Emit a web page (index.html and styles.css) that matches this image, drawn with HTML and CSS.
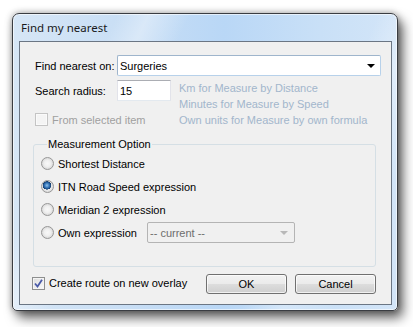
FILE: index.html
```html
<!DOCTYPE html>
<html>
<head>
<meta charset="utf-8">
<link rel="stylesheet" href="styles.css">
</head>
<body>
<div class="window">
  <div class="titlebar">Find my nearest</div>
  <div class="client">
    <div class="row-find">
      <span class="label">Find nearest on:</span>
      <div class="combo combo-main"><span class="combo-text">Surgeries</span><span class="arrow"></span></div>
    </div>
    <div class="row-radius">
      <div class="left">
        <div class="line"><span class="label">Search radius:</span><div class="textbox">15</div></div>
        <div class="check disabled"><span class="box"></span><span class="check-text">From selected item</span></div>
      </div>
      <div class="hints">
        <div>Km for Measure by Distance</div>
        <div>Minutes for Measure by Speed</div>
        <div>Own units for Measure by own formula</div>
      </div>
    </div>
    <fieldset class="group">
      <legend>Measurement Option</legend>
      <div class="radio"><span class="dot"></span><span class="radio-text">Shortest Distance</span></div>
      <div class="radio"><span class="dot on"></span><span class="radio-text">ITN Road Speed expression</span></div>
      <div class="radio"><span class="dot"></span><span class="radio-text">Meridian 2 expression</span></div>
      <div class="radio"><span class="dot"></span><span class="radio-text own">Own expression</span>
        <div class="combo combo-off"><span class="combo-text">-- current --</span><span class="arrow"></span></div>
      </div>
    </fieldset>
    <div class="footer">
      <div class="check"><span class="box checked"><svg width="9" height="9" viewBox="0 0 9 9"><path d="M1 4.5 L3.5 7.5 L8 0.8" fill="none" stroke="#4a5aa8" stroke-width="1.8"/></svg></span><span class="check-text">Create route on new overlay</span></div>
      <div class="buttons">
        <div class="btn">OK</div>
        <div class="btn">Cancel</div>
      </div>
    </div>
  </div>
</div>
</body>
</html>
```

FILE: styles.css
```css
html, body {
  margin: 0;
  padding: 0;
  background: #ffffff;
}
body {
  width: 413px;
  height: 327px;
  overflow: hidden;
  font-family: "Liberation Sans", Arial, sans-serif;
  font-size: 11px;
  color: #000;
}
.window {
  margin: 13px 0 0 12px;
  width: 386px;
  height: 298px;
  box-sizing: border-box;
  border: 1px solid #3a3d42;
  border-radius: 7px 7px 5px 5px;
  padding: 0 5px 5px 6px;
  display: flex;
  flex-direction: column;
  background:
    linear-gradient(115deg, rgba(255,255,255,0) 20%, rgba(255,255,255,0.35) 26%, rgba(255,255,255,0) 34%, rgba(255,255,255,0) 70%, rgba(255,255,255,0.3) 78%, rgba(255,255,255,0) 88%),
    linear-gradient(to right, #d6e6f6 0%, #c8def5 30%, #b9d7f6 55%, #c9e0f7 80%, #d3e5f8 100%);
  box-shadow: 5px 7px 12px rgba(0,0,0,0.6), 0 0 7px rgba(0,0,0,0.35), inset 0 0 0 1px rgba(255,255,255,0.6);
}
.titlebar {
  height: 27px;
  display: flex;
  align-items: center;
  padding-left: 2px;
  font-family: "Noto Sans", "Open Sans", sans-serif;
  font-size: 11.5px;
  color: #1a1a1a;
  flex: none;
}
.client {
  flex: 1;
  background: #f0f0f0;
  border: 1px solid #6b7684;
  display: flex;
  flex-direction: column;
}
.label {
  display: inline-block;
  width: 82px;
  flex: none;
}
.row-find {
  margin-top: 13px;
  padding-left: 15px;
  display: flex;
  align-items: center;
  height: 21px;
}
.combo {
  box-sizing: border-box;
  height: 21px;
  display: flex;
  align-items: center;
  position: relative;
}
.combo-main {
  width: 264px;
  background: #fff;
  border: 1px solid #9fb5cc;
  border-right-color: #b7d1ea;
  border-bottom-color: #b7d1ea;
  border-radius: 2px;
  padding-left: 2px;
}
.combo-text {
  flex: 1;
}
.arrow {
  width: 0;
  height: 0;
  border-left: 4px solid transparent;
  border-right: 4px solid transparent;
  border-top: 4px solid #000;
  margin-right: 5px;
}
.row-radius {
  margin-top: 4px;
  padding-left: 15px;
  display: flex;
}
.left {
  width: 136px;
  flex: none;
}
.line {
  display: flex;
  align-items: center;
  height: 21px;
}
.textbox {
  box-sizing: border-box;
  width: 54px;
  height: 21px;
  background: #fff;
  border: 1px solid #e2e3ea;
  border-top-color: #abadb3;
  border-bottom-color: #e3e9ef;
  padding-left: 2px;
  display: flex;
  align-items: center;
}
.hints {
  margin-left: 8px;
  color: #a2b6cc;
  line-height: 16px;
}
.check {
  display: flex;
  align-items: center;
}
.row-radius .check {
  margin-top: 12px;
}
.box {
  box-sizing: border-box;
  width: 13px;
  height: 13px;
  border: 1px solid #8e8f8f;
  background: linear-gradient(135deg, #dcdcdc, #fbfbfb);
  box-shadow: inset 0 0 0 1px #f4f4f4;
  display: flex;
  align-items: center;
  justify-content: center;
  flex: none;
}
.check.disabled .box {
  border-color: #c4c4c4;
  background: #f4f4f4;
  box-shadow: inset 0 0 0 1px #fafafa;
}
.check-text {
  margin-left: 4px;
}
.check.disabled .check-text {
  color: #a0a0a0;
}
.group {
  margin: 10px 0 0 13px;
  width: 343px;
  box-sizing: border-box;
  border: 1px solid #d5dfe5;
  border-radius: 3px;
  padding: 1px 0 22px 7px;
  min-width: 0;
}
.group legend {
  padding: 0 1px;
  margin-left: 6px;
  line-height: 13px;
}
.radio {
  display: flex;
  align-items: center;
  height: 23px;
}
.dot {
  box-sizing: border-box;
  width: 13px;
  height: 13px;
  border-radius: 50%;
  border: 1px solid #979797;
  background: radial-gradient(circle at 50% 50%, #f8f8f8 0%, #f0f0f0 40%, #d2d2d2 85%);
  flex: none;
}
.dot.on {
  background:
    radial-gradient(circle at 45% 40%, #8fc1ea 0%, #2b6bb0 30%, #163e6d 45%, rgba(0,0,0,0) 48%),
    radial-gradient(circle at 50% 50%, #f8f8f8 0%, #f0f0f0 40%, #d2d2d2 85%);
}
.radio-text {
  margin-left: 4px;
}
.radio-text.own {
  width: 89px;
}
.combo-off {
  width: 148px;
  background: #f0f0f0;
  border: 1px solid #b4b4b4;
  border-radius: 2px;
  padding-left: 2px;
  color: #6d6d6d;
}
.combo-off .arrow {
  border-top-color: #b8b8b8;
  margin-right: 6px;
}
.footer {
  margin-top: 7px;
  padding: 0 15px 0 12px;
  display: flex;
  align-items: center;
  height: 20px;
}
.footer .check {
  margin-top: -2px;
}
.buttons {
  margin-left: auto;
  display: flex;
  gap: 8px;
}
.btn {
  box-sizing: border-box;
  width: 81px;
  height: 20px;
  border: 1px solid #707070;
  border-radius: 3px;
  background: linear-gradient(to bottom, #f2f2f2 0%, #ebebeb 49%, #dddddd 50%, #cfcfcf 100%);
  box-shadow: inset 0 0 0 1px rgba(255,255,255,0.7);
  display: flex;
  align-items: center;
  justify-content: center;
}
```
